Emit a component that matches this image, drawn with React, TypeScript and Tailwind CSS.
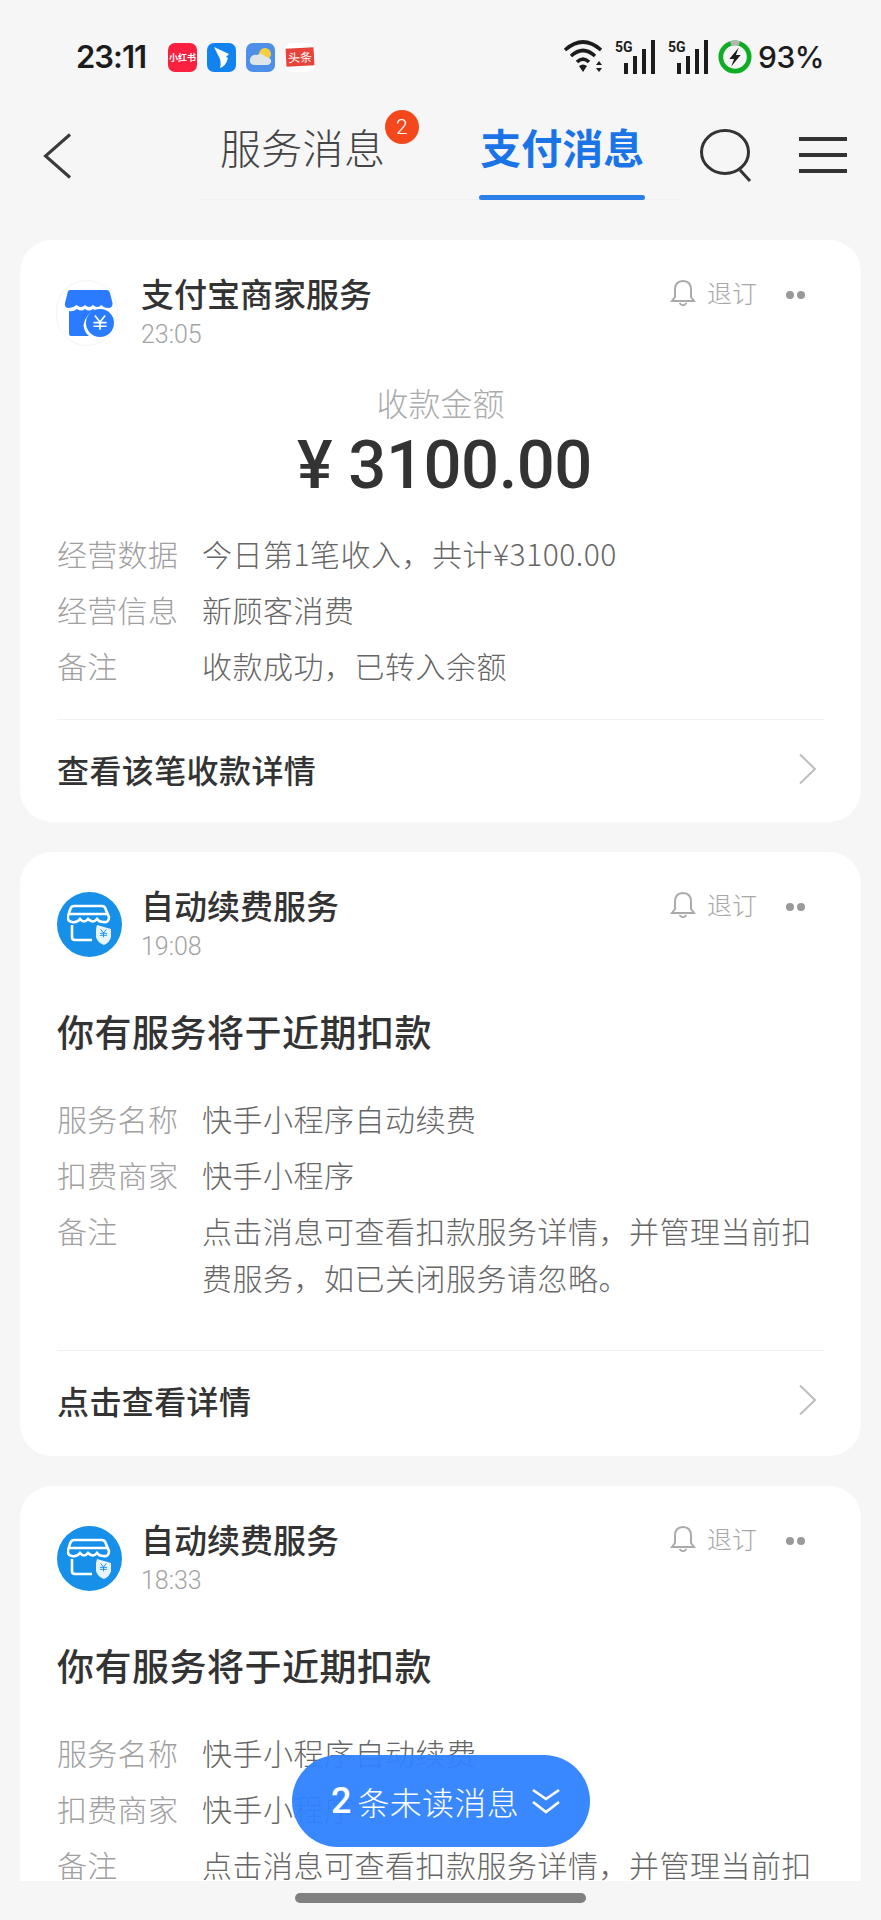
import React from 'react';

const FONT = "font-['Noto_Sans_CJK_SC','Noto_Sans',sans-serif]";

const YenLines = ({ cx, cy, s, color }: { cx: number; cy: number; s: number; color: string }) => (
  <g stroke={color} strokeWidth={s * 0.26} fill="none">
    <path d={`M${cx - s * 0.8} ${cy - s} L${cx} ${cy} L${cx + s * 0.8} ${cy - s} M${cx} ${cy} V${cy + s * 1.2} M${cx - s} ${cy + s * 0.1} H${cx + s} M${cx - s} ${cy + s * 0.65} H${cx + s}`} />
  </g>
);

const MerchantIcon = () => (
  <div className="w-[62px] h-[66px] -ml-[1px] shrink-0 rounded-full border border-[#f4f4f4] flex items-center justify-center">
    <svg width="50" height="50" viewBox="0 0 50 50" className="ml-[3px]">
      <path d="M6 2 H43 Q45 2 46 5 L48.5 15 Q49 20 44 20 Q40 20 37.5 17 Q33 21 29 17 Q25 21 21 17 Q17 21 12.5 17 Q9 20 5 20 Q0 20 1 15 L3.5 5 Q4 2 6 2Z" fill="#2a7bff" />
      <path d="M5 23 Q9 24 13 21 Q17 24 21 21 Q25 24 29 21 L31 22 Q21 27 19.5 37 Q20 44 25 48 H7 Q5 48 5 46Z" fill="#2a7bff" />
      <circle cx="36" cy="35" r="14" fill="#2a7bff" />
      <YenLines cx={36} cy={34} s={6.5} color="#fff" />
    </svg>
  </div>
);

const RenewIcon = () => (
  <div className="w-[65px] h-[65px] shrink-0 rounded-full bg-[#1790ea] flex items-center justify-center">
    <svg width="46" height="42" viewBox="0 0 46 42" fill="none">
      <path d="M7 2 H35 Q38 2 39 6 L42 13 Q42 19 36 18 Q32 18 30 15 Q26 20 21 15 Q17 20 13 15 Q10 19 5 18 Q0 17 1 12 L3 6 Q4 2 7 2Z" stroke="#fff" strokeWidth="2.6" />
      <path d="M2 10 H41" stroke="#fff" strokeWidth="2.6" />
      <path d="M5 21 V33 Q5 36 8 36 H25" stroke="#fff" strokeWidth="2.6" />
      <path d="M30 21 L44 25 V33 Q43 38 37 41 Q30 38 29 33 V25Z" fill="#fff" opacity="0.9" />
      <YenLines cx={36.5} cy={29} s={3.6} color="#1790ea" />
    </svg>
  </div>
);

const Chevron = () => (
  <svg width="20" height="32" viewBox="0 0 20 32" fill="none" className="shrink-0 mr-[6px]">
    <path d="M2 1.5 L17 16 L2 30.5" stroke="#bdbdbd" strokeWidth="2" />
  </svg>
);

const CardHeader = ({ icon, title, time }: { icon: React.ReactNode; title: string; time: string }) => (
  <div className="flex items-start h-[79px]">
    <div className="w-[84px] pt-[11px] flex">{icon}</div>
    <div className="flex-1">
      <div className="text-[33px] leading-[48px] font-medium text-[#333]">{title}</div>
      <div className="text-[25px] leading-[28px] mt-[4px] text-[#a3a3a3] font-['Roboto',sans-serif] font-light">{time}</div>
    </div>
    <div className="flex items-center h-[48px] text-[#a8a8a8] text-[25px] font-light">
      <svg width="26" height="30" viewBox="0 0 26 30" fill="none" className="mr-[11px]">
        <path d="M13 3 Q21 3 21 12 V19 L24 23 H2 L5 19 V12 Q5 3 13 3Z" stroke="#aaa" strokeWidth="2" />
        <path d="M9.5 25 Q13 29.5 16.5 25" stroke="#aaa" strokeWidth="2" />
      </svg>
      <span>退订</span>
      <span className="flex gap-[3px] ml-[29px] mr-[19px] mt-[3px]">
        <span className="w-[8px] h-[8px] rounded-full bg-[#999]" />
        <span className="w-[8px] h-[8px] rounded-full bg-[#999]" />
      </span>
    </div>
  </div>
);

const Row = ({ label, lines }: { label: string; lines: string[] }) => (
  <div className="flex">
    <div className="w-[145px] shrink-0 text-[30px] leading-[56px] tracking-[0.3px] text-[#a0a0a0] font-light">{label}</div>
    <div className="text-[30px] tracking-[0.5px] text-[#666] font-light">
      {lines.map((l) => (
        <div key={l} className="leading-[39px] first:leading-[56px]">{l}</div>
      ))}
    </div>
  </div>
);

const CardFooter = ({ text }: { text: string }) => (
  <>
    <div className="h-px bg-[#f0f0f0]" />
    <div className="flex items-center justify-between h-[102px] pb-[4px] text-[32px] font-medium text-[#333]">
      <span className="tracking-[0.4px]">{text}</span>
      <Chevron />
    </div>
  </>
);

const RenewCard = ({ time, clipped }: { time: string; clipped?: boolean }) => (
  <div className={`bg-white rounded-[32px] px-[37px] pt-[29px] ${clipped ? 'h-[395px] rounded-b-none overflow-hidden' : 'h-[604px]'}`}>
    <CardHeader icon={<RenewIcon />} title="自动续费服务" time={time} />
    <div className="text-[37px] tracking-[0.5px] leading-[52px] font-medium text-[#333] mt-[45px]">你有服务将于近期扣款</div>
    <div className="mt-[33px]">
      <Row label="服务名称" lines={['快手小程序自动续费']} />
      <Row label="扣费商家" lines={['快手小程序']} />
      <Row label="备注" lines={['点击消息可查看扣款服务详情，并管理当前扣', '费服务，如已关闭服务请忽略。']} />
    </div>
    <div className="mt-[53px]">
      <CardFooter text="点击查看详情" />
    </div>
  </div>
);

const StatusBar = () => (
  <div className="h-[100px] flex items-center pl-[76px] pr-[57px] pt-[14px] text-[#1c1c1c]">
    <span className="text-[31px] font-semibold font-['Inter',sans-serif] tracking-[-1px] w-[92px]">23:11</span>
    <div className="flex gap-[10px] items-center">
      <div className="w-[29px] h-[29px] rounded-[7px] bg-[#f9213f] flex items-center justify-center text-white text-[9px] font-bold leading-none whitespace-nowrap">小红书</div>
      <div className="w-[29px] h-[29px] rounded-[7px] bg-[#1183f0] flex items-center justify-center">
        <svg width="18" height="24" viewBox="0 0 18 24"><path d="M1 2 L16 9 L13 12 L15 13 Q13 21 7 23 Q9 16 5 10Z" fill="#fff" /></svg>
      </div>
      <div className="w-[29px] h-[29px] rounded-[7px] bg-[#4e8fea] flex items-center justify-center">
        <svg width="24" height="20" viewBox="0 0 24 20"><circle cx="16" cy="7" r="6" fill="#f8cd3e" /><path d="M6 18 Q0 18 1 12 Q3 7 8 8 Q13 5 17 10 Q23 11 22 15 Q21 18 18 18Z" fill="#dfe6e8" /></svg>
      </div>
      <div className="w-[30px] h-[29px] rounded-[7px] bg-white flex items-center justify-center">
        <div className="w-[28px] h-[18px] bg-[#e8433a] -rotate-3 text-white text-[12px] leading-[18px] text-center whitespace-nowrap">头条</div>
      </div>
    </div>
    <div className="ml-auto flex items-center">
      <svg width="42" height="36" viewBox="0 0 42 36" fill="none" className="mr-[10px]">
        <path d="M2 11 Q20 -5 38 11 M8 17 Q20 6 32 17 M14 23 Q20 17 26 23" stroke="#1c1c1c" strokeWidth="3.6" />
        <path d="M16 27 Q20 24 24 27 L20 33Z" fill="#1c1c1c" />
        <path d="M36 22 L39 26 H33Z M36 33 L39 29 H33Z" fill="#1c1c1c" />
      </svg>
      {[0, 1].map((i) => (
        <svg key={i} width="42" height="36" viewBox="0 0 42 36" className="mr-[11px]">
          <text x="0" y="13" fontSize="14" fontWeight="700" fill="#1c1c1c" fontFamily="Roboto">5G</text>
          <rect x="9" y="24" width="4" height="11" fill="#1c1c1c" />
          <rect x="18" y="17" width="4" height="18" fill="#1c1c1c" />
          <rect x="27" y="10" width="4" height="25" fill="#1c1c1c" />
          <rect x="36" y="1" width="4" height="34" fill="#1c1c1c" />
        </svg>
      ))}
      <svg width="34" height="36" viewBox="0 0 36 38" fill="none" className="-ml-[3px] mr-[6px]">
        <circle cx="18" cy="19" r="15" stroke="#10ad24" strokeWidth="5" />
        <path d="M13.5 4.7 A15 15 0 0 1 22.5 4.7" stroke="#b5b5b5" strokeWidth="5" />
        <path d="M22 9 L12 21 H17 L14 29 L24 17 H19Z" fill="#1c1c1c" />
      </svg>
      <span className="text-[30px] font-['Inter',sans-serif] font-medium tracking-[-0.5px]">93%</span>
    </div>
  </div>
);

const NavBar = () => (
  <div className="h-[100px] flex items-start">
    <svg width="30" height="46" viewBox="0 0 30 46" fill="none" className="ml-[43px] mt-[33px] shrink-0">
      <path d="M27 1.5 L2.5 23 L27 44.5" stroke="#3a3a3a" strokeWidth="3" />
    </svg>
    <div className="ml-[127px] w-[480px] h-[100px] border-b border-[#f0f0f0] flex items-start">
      <div className="relative ml-[20px] text-[41px] tracking-[0.3px] leading-[60px] mt-[16px] text-[#444] font-light">
        服务消息
        <span className="absolute left-[165px] -top-[6px] w-[34px] h-[34px] rounded-full bg-[#f4471b] text-white text-[21px] font-light leading-[34px] text-center font-['Roboto',sans-serif]">2</span>
      </div>
      <div className="ml-[94px] flex flex-col items-center h-[100px]">
        <div className="text-[41px] leading-[60px] mt-[16px] font-bold text-[#1a74e8]">支付消息</div>
        <div className="mt-auto w-[166px] h-[5px] rounded-full bg-[#2a7fe8]" />
      </div>
    </div>
    <svg width="54" height="56" viewBox="0 0 54 56" fill="none" className="ml-[19px] mt-[28px] shrink-0">
      <ellipse cx="26" cy="24" rx="23.5" ry="21.5" stroke="#333" strokeWidth="3" />
      <path d="M41 42 L51 53" stroke="#333" strokeWidth="3" />
    </svg>
    <div className="ml-[46px] mt-[37px] w-[48px] flex flex-col gap-[12px] shrink-0">
      <div className="h-[4px] bg-[#333]" />
      <div className="h-[4px] bg-[#333]" />
      <div className="h-[4px] bg-[#333]" />
    </div>
  </div>
);

export default function App() {
  return (
    <div className={`relative w-[881px] h-[1920px] overflow-hidden bg-[#f6f6f6] ${FONT}`}>
      <StatusBar />
      <NavBar />
      <div className="mx-[20px] mt-[40px] flex flex-col gap-[30px]">
        <div className="bg-white rounded-[32px] px-[37px] pt-[29px] h-[582px]">
          <CardHeader icon={<MerchantIcon />} title="支付宝商家服务" time="23:05" />
          <div className="text-center text-[32px] leading-[48px] text-[#ababab] font-light mt-[30px]">收款金额</div>
          <div className="text-center text-[67px] leading-[79px] tracking-[-0.5px] font-medium text-[#333] font-['Roboto',sans-serif] ml-[8px]">¥ 3100.00</div>
          <div className="mt-[20px]">
            <Row label="经营数据" lines={['今日第1笔收入，共计¥3100.00']} />
            <Row label="经营信息" lines={['新顾客消费']} />
            <Row label="备注" lines={['收款成功，已转入余额']} />
          </div>
          <div className="mt-[26px]">
            <CardFooter text="查看该笔收款详情" />
          </div>
        </div>
        <RenewCard time="19:08" />
        <RenewCard time="18:33" clipped />
      </div>
      {/* unread pill floats over the last card, slightly see-through */}
      <div className="absolute left-[292px] top-[1755px] w-[298px] h-[92px] pl-[39px] rounded-full bg-[#2f82ff]/95 flex items-center text-white text-[32px]">
        <span className="font-medium font-['Roboto',sans-serif] text-[36px] mr-[6px]">2</span>
        <span className="tracking-[0.3px] font-light">条未读消息</span>
        <svg width="30" height="28" viewBox="0 0 30 28" fill="none" className="ml-[12px]">
          <path d="M2 3 L15 12 L28 3 M2 15 L15 25 L28 15" stroke="#fff" strokeWidth="2.6" />
        </svg>
      </div>
      <div className="absolute left-[295px] top-[1893px] w-[291px] h-[10px] rounded-full bg-[#808080]" />
    </div>
  );
}
